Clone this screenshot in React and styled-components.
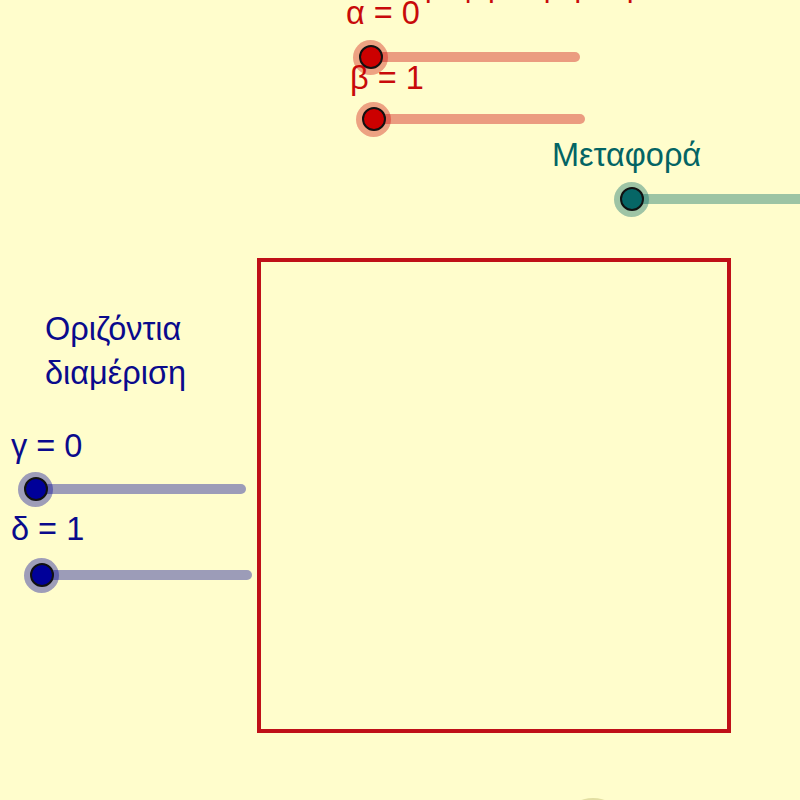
import React from "react";
import styled, { createGlobalStyle } from "styled-components";

const GlobalStyle = createGlobalStyle`
  html, body {
    margin: 0;
    padding: 0;
    background: #fffdcc;
  }
  body {
    font-family: "Liberation Sans", Arial, sans-serif;
  }
`;

const tones = {
  red: { text: "#c80a0a", dot: "#cc0000", track: "#eb9c80", halo: "rgba(204, 0, 0, 0.36)" },
  teal: { text: "#036464", dot: "#066666", track: "#9cc4a4", halo: "rgba(0, 102, 102, 0.38)" },
  blue: { text: "#0a0a8c", dot: "#000099", track: "#9c9cb8", halo: "rgba(0, 0, 153, 0.38)" },
};

// each slider: caption position on the canvas, then where the knob sits below it
const sliders = [
  { id: "alpha", tone: "red", x: 346, y: -3, label: "α = 0", indent: 7, gap: 10, len: 209 },
  { id: "beta", tone: "red", x: 350, y: 62, label: "β = 1", indent: 6, gap: 7, len: 211 },
  { id: "move", tone: "teal", x: 552, y: 139, label: "Μεταφορά", indent: 62, gap: 10, len: 200 },
  { id: "gamma", tone: "blue", x: 11, y: 430, label: "γ = 0", indent: 7, gap: 9, len: 210 },
  { id: "delta", tone: "blue", x: 11, y: 513, label: "δ = 1", indent: 13, gap: 12, len: 210 },
];

const App = () => {
  return (
    <>
      <GlobalStyle />
      <Canvas>
        <Square />

        <Heading $tone="red">Κατακόρυφη διαμέριση</Heading>

        {sliders.map((s) => (
          <SliderGroup key={s.id} $x={s.x} $y={s.y} $gap={s.gap}>
            <Caption $tone={s.tone}>{s.label}</Caption>
            <SliderRow $indent={s.indent}>
              <Halo $tone={s.tone}>
                <Knob $tone={s.tone} />
              </Halo>
              <Track $tone={s.tone} style={{ width: s.len }} />
            </SliderRow>
          </SliderGroup>
        ))}

        <TextBlock $tone="blue">
          Οριζόντια
          <br />
          διαμέριση
        </TextBlock>

        <BottomButton />
      </Canvas>
    </>
  );
};

const Canvas = styled.div`
  position: relative;
  width: 800px;
  height: 800px;
  overflow: hidden;
  background: #fffdcc;
`;

const Square = styled.div`
  position: absolute;
  left: 257px;
  top: 258px;
  width: 474px;
  height: 475px;
  box-sizing: border-box;
  border: 4px solid #bf1018;
`;

const Heading = styled.div`
  position: absolute;
  left: 328px;
  top: -28px;
  font-size: 30px;
  line-height: 30px;
  white-space: nowrap;
  color: ${({ $tone }) => tones[$tone].text};
`;

const SliderGroup = styled.div`
  position: absolute;
  left: ${({ $x }) => $x}px;
  top: ${({ $y }) => $y}px;
  display: flex;
  flex-direction: column;
  align-items: flex-start;
  gap: ${({ $gap }) => $gap}px;
`;

const Caption = styled.div`
  font-size: 32.5px;
  line-height: 32.5px;
  white-space: nowrap;
  color: ${({ $tone }) => tones[$tone].text};
`;

const SliderRow = styled.div`
  display: flex;
  align-items: center;
  padding-left: ${({ $indent }) => $indent}px;
`;

const Halo = styled.div`
  position: relative;
  z-index: 1;
  flex: none;
  width: 35px;
  height: 35px;
  border-radius: 50%;
  background: ${({ $tone }) => tones[$tone].halo};
  display: flex;
  align-items: center;
  justify-content: center;
`;

const Knob = styled.div`
  width: 24px;
  height: 24px;
  box-sizing: border-box;
  border-radius: 50%;
  border: 2px solid #111;
  background: ${({ $tone }) => tones[$tone].dot};
`;

const Track = styled.div`
  flex: none;
  margin-left: -17px;
  height: 10px;
  border-radius: 5px;
  background: ${({ $tone }) => tones[$tone].track};
`;

const TextBlock = styled.div`
  position: absolute;
  left: 45px;
  top: 307px;
  font-size: 32.5px;
  line-height: 44px;
  color: ${({ $tone }) => tones[$tone].text};
`;

const BottomButton = styled.div`
  position: absolute;
  left: 569px;
  top: 798px;
  width: 48px;
  height: 30px;
  border-radius: 50%;
  background: #e2dea2;
`;

export default App;
